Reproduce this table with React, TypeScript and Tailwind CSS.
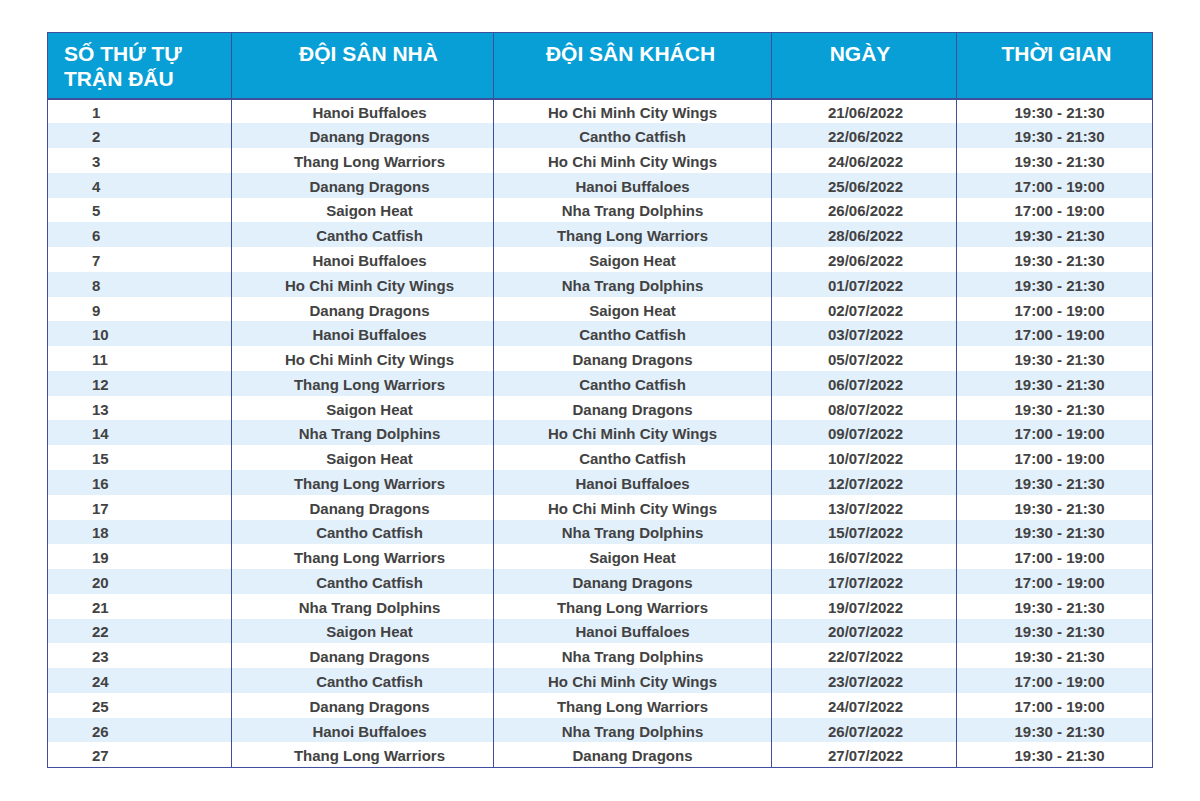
import React from "react";

const rows: [string, string, string, string][] = [
  ["Hanoi Buffaloes", "Ho Chi Minh City Wings", "21/06/2022", "19:30 - 21:30"],
  ["Danang Dragons", "Cantho Catfish", "22/06/2022", "19:30 - 21:30"],
  ["Thang Long Warriors", "Ho Chi Minh City Wings", "24/06/2022", "19:30 - 21:30"],
  ["Danang Dragons", "Hanoi Buffaloes", "25/06/2022", "17:00 - 19:00"],
  ["Saigon Heat", "Nha Trang Dolphins", "26/06/2022", "17:00 - 19:00"],
  ["Cantho Catfish", "Thang Long Warriors", "28/06/2022", "19:30 - 21:30"],
  ["Hanoi Buffaloes", "Saigon Heat", "29/06/2022", "19:30 - 21:30"],
  ["Ho Chi Minh City Wings", "Nha Trang Dolphins", "01/07/2022", "19:30 - 21:30"],
  ["Danang Dragons", "Saigon Heat", "02/07/2022", "17:00 - 19:00"],
  ["Hanoi Buffaloes", "Cantho Catfish", "03/07/2022", "17:00 - 19:00"],
  ["Ho Chi Minh City Wings", "Danang Dragons", "05/07/2022", "19:30 - 21:30"],
  ["Thang Long Warriors", "Cantho Catfish", "06/07/2022", "19:30 - 21:30"],
  ["Saigon Heat", "Danang Dragons", "08/07/2022", "19:30 - 21:30"],
  ["Nha Trang Dolphins", "Ho Chi Minh City Wings", "09/07/2022", "17:00 - 19:00"],
  ["Saigon Heat", "Cantho Catfish", "10/07/2022", "17:00 - 19:00"],
  ["Thang Long Warriors", "Hanoi Buffaloes", "12/07/2022", "19:30 - 21:30"],
  ["Danang Dragons", "Ho Chi Minh City Wings", "13/07/2022", "19:30 - 21:30"],
  ["Cantho Catfish", "Nha Trang Dolphins", "15/07/2022", "19:30 - 21:30"],
  ["Thang Long Warriors", "Saigon Heat", "16/07/2022", "17:00 - 19:00"],
  ["Cantho Catfish", "Danang Dragons", "17/07/2022", "17:00 - 19:00"],
  ["Nha Trang Dolphins", "Thang Long Warriors", "19/07/2022", "19:30 - 21:30"],
  ["Saigon Heat", "Hanoi Buffaloes", "20/07/2022", "19:30 - 21:30"],
  ["Danang Dragons", "Nha Trang Dolphins", "22/07/2022", "19:30 - 21:30"],
  ["Cantho Catfish", "Ho Chi Minh City Wings", "23/07/2022", "17:00 - 19:00"],
  ["Danang Dragons", "Thang Long Warriors", "24/07/2022", "17:00 - 19:00"],
  ["Hanoi Buffaloes", "Nha Trang Dolphins", "26/07/2022", "19:30 - 21:30"],
  ["Thang Long Warriors", "Danang Dragons", "27/07/2022", "19:30 - 21:30"],
];

export default function App() {
  return (
    <div
      className="w-[1200px] h-[801px] bg-white pt-[32px] pl-[47px]"
      style={{ fontFamily: '"Liberation Sans", Arial, sans-serif' }}
    >
      <table className="table-fixed border-collapse w-[1105px] border border-[#3f4f9c]">
        <colgroup>
          <col className="w-[184px]" />
          <col className="w-[262px]" />
          <col className="w-[278px]" />
          <col className="w-[185px]" />
          <col className="w-[196px]" />
        </colgroup>
        <thead>
          <tr className="h-[66px] bg-[#079fd6] text-white text-[21px] font-bold leading-[25px]">
            <th className="border border-[#3f4f9c] border-b-2 align-top text-left pl-[16px] pt-[8px]">
              SỐ THỨ TỰ
              <br />
              TRẬN ĐẤU
            </th>
            <th className="border border-[#3f4f9c] border-b-2 align-top text-center pl-[12px] pt-[8px]">ĐỘI SÂN NHÀ</th>
            <th className="border border-[#3f4f9c] border-b-2 align-top text-center pr-[4px] pt-[8px]">ĐỘI SÂN KHÁCH</th>
            <th className="border border-[#3f4f9c] border-b-2 align-top text-center pr-[8px] pt-[8px]">NGÀY</th>
            <th className="border border-[#3f4f9c] border-b-2 align-top text-center pl-[4px] pt-[8px]">THỜI GIAN</th>
          </tr>
        </thead>
        <tbody className="text-[15px] font-bold text-[#424242]">
          {rows.map((r, i) => (
            <tr key={i} className={i % 2 === 0 ? "h-[24.78px] bg-white" : "h-[24.78px] bg-[#e2f0fc]"}>
              <td className="border-x border-[#3f4f9c] text-left pl-[44px] pt-[2px] leading-[17px]">{i + 1}</td>
              <td className="border-x border-[#3f4f9c] text-center pl-[14px] pt-[2px] leading-[17px]">{r[0]}</td>
              <td className="border-x border-[#3f4f9c] text-center pt-[2px] leading-[17px]">{r[1]}</td>
              <td className="border-x border-[#3f4f9c] text-center pl-[3px] pt-[2px] leading-[17px]">{r[2]}</td>
              <td className="border-x border-[#3f4f9c] text-center pl-[10px] pt-[2px] leading-[17px]">{r[3]}</td>
            </tr>
          ))}
        </tbody>
      </table>
    </div>
  );
}
